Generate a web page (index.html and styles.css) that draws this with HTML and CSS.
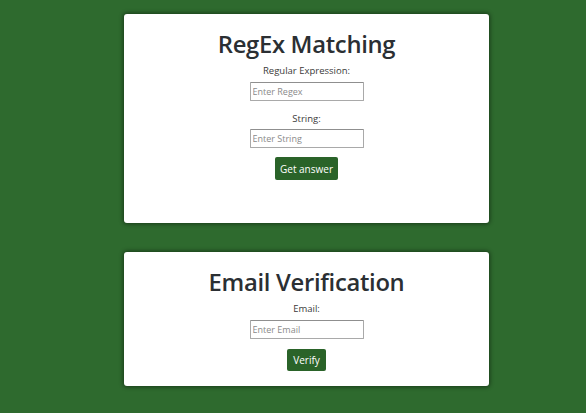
FILE: index.html
```html
<!DOCTYPE html>
<html>
<head>
<meta charset="utf-8">
<link rel="stylesheet" href="styles.css">
</head>
<body>
<main class="page">
  <section class="card">
    <h1 class="title">RegEx Matching</h1>
    <label class="label" for="regex">Regular Expression:</label>
    <input class="field" id="regex" type="text" placeholder="Enter Regex">
    <label class="label label-gap" for="str">String:</label>
    <input class="field field-tight" id="str" type="text" placeholder="Enter String">
    <button class="btn">Get answer</button>
    <div class="result"></div>
  </section>
  <section class="card">
    <h1 class="title">Email Verification</h1>
    <label class="label" for="email">Email:</label>
    <input class="field" id="email" type="text" placeholder="Enter Email">
    <button class="btn btn-small">Verify</button>
  </section>
</main>
</body>
</html>
```
FILE: styles.css
```css
html, body {
  margin: 0;
  padding: 0;
  background: #2e6a2e;
  height: 100%;
}
body {
  font-family: "Open Sans", "Noto Sans", sans-serif;
  color: #212529;
}
.page {
  display: flex;
  flex-direction: column;
  align-items: center;
  gap: 29px;
  padding-top: 14px;
  padding-left: 27px;
}
.card {
  box-sizing: border-box;
  width: 365px;
  background: #fff;
  border-radius: 3px;
  box-shadow: 0 0 4px 1px rgba(0, 0, 0, 0.45);
  display: flex;
  flex-direction: column;
  align-items: center;
  padding: 15px 0 15px;
}
.title {
  margin: 0;
  font-size: 23.8px;
  line-height: 30px;
  font-weight: 600;
  letter-spacing: -0.3px;
  color: #2b2f33;
}
.label {
  margin-top: 5px;
  font-size: 9.5px;
  line-height: 14px;
  color: #3a3a3a;
}
.label-gap {
  margin-top: 11px;
}
.field {
  box-sizing: border-box;
  margin-top: 4px;
  width: 114px;
  height: 19px;
  border: 1px solid #a9a9a9;
  border-top-color: #8f8f8f;
  border-radius: 1px;
  padding: 0 2px;
  font-family: "Open Sans", sans-serif;
  font-size: 9px;
  outline: none;
}
.field-tight {
  margin-top: 3px;
}
.field::placeholder {
  color: #8a8a8a;
}
.btn {
  margin-top: 9px;
  height: 23px;
  width: 63px;
  background: #2a6329;
  color: #fff;
  border: none;
  border-radius: 2px;
  font-family: "Open Sans", sans-serif;
  font-size: 10px;
  padding: 0;
  cursor: pointer;
}
.btn-small {
  width: 39px;
  height: 22px;
  margin-top: 10px;
}
.result {
  height: 28px;
}
```
